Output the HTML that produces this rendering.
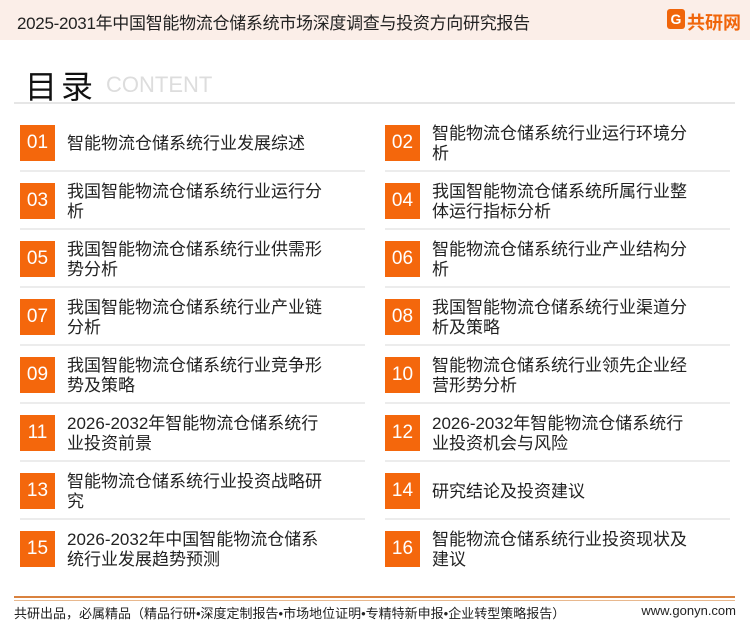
<!DOCTYPE html>
<html><head><meta charset="utf-8"><style>
body{margin:0;width:750px;height:622px;background:#fff;font-family:"Liberation Sans","Noto Sans CJK SC",sans-serif;position:relative;overflow:hidden;color:#222}
.hdr{position:absolute;left:0;top:0;width:750px;height:40px;background:#fbeee8}
.hdr .t{position:absolute;left:17px;top:9px;font-size:17px;color:#222;letter-spacing:-0.3px}
.logo{position:absolute;left:667px;top:9px;font-size:18px;font-weight:bold;color:#f0650a}
.logo b{display:inline-block;width:18px;height:20px;background:#f0650a;color:#fff;font-size:14px;text-align:center;line-height:20px;border-radius:3px;margin-right:2px;vertical-align:top}
.ml{position:absolute;left:25px;top:62px;font-size:32px;color:#111;letter-spacing:4px}
.ct{position:absolute;left:106px;top:72px;font-size:22px;color:#ddd}
.hl{position:absolute;left:14px;top:102px;width:721px;height:2px;background:#e6e6e6}
.box{position:absolute;width:35px;height:36px;background:#f4670c;color:#fff;font-size:19px;text-align:center;line-height:36px}
.tx{position:absolute;font-size:17px;line-height:20px;color:#222;width:262px}
.sep{position:absolute;height:2px;background:#ececec;width:345px}
.fl1{position:absolute;left:14px;top:596px;width:721px;height:2px;background:#d9823f}
.fl2{position:absolute;left:14px;top:600px;width:721px;height:1px;background:#e8b88e}
.ft{position:absolute;left:14px;top:603px;font-size:13px;color:#222}
.fr{position:absolute;right:14px;top:603px;font-size:13px;color:#222}
</style></head><body>
<div class="hdr"><div class="t">2025-2031年中国智能物流仓储系统市场深度调查与投资方向研究报告</div><div class="logo"><b>G</b>共研网</div></div>
<div class="ml">目录</div><div class="ct">CONTENT</div><div class="hl"></div>

<div class="box" style="left:20px;top:125px">01</div><div class="tx" style="left:67px;top:134px">智能物流仓储系统行业发展综述</div><div class="sep" style="left:20px;top:170px"></div>
<div class="box" style="left:385px;top:125px">02</div><div class="tx" style="left:432px;top:124px">智能物流仓储系统行业运行环境分析</div><div class="sep" style="left:385px;top:170px"></div>

<div class="box" style="left:20px;top:183px">03</div><div class="tx" style="left:67px;top:182px">我国智能物流仓储系统行业运行分析</div><div class="sep" style="left:20px;top:228px"></div>
<div class="box" style="left:385px;top:183px">04</div><div class="tx" style="left:432px;top:182px">我国智能物流仓储系统所属行业整体运行指标分析</div><div class="sep" style="left:385px;top:228px"></div>

<div class="box" style="left:20px;top:241px">05</div><div class="tx" style="left:67px;top:240px">我国智能物流仓储系统行业供需形势分析</div><div class="sep" style="left:20px;top:286px"></div>
<div class="box" style="left:385px;top:241px">06</div><div class="tx" style="left:432px;top:240px">智能物流仓储系统行业产业结构分析</div><div class="sep" style="left:385px;top:286px"></div>

<div class="box" style="left:20px;top:299px">07</div><div class="tx" style="left:67px;top:298px">我国智能物流仓储系统行业产业链分析</div><div class="sep" style="left:20px;top:344px"></div>
<div class="box" style="left:385px;top:299px">08</div><div class="tx" style="left:432px;top:298px">我国智能物流仓储系统行业渠道分析及策略</div><div class="sep" style="left:385px;top:344px"></div>

<div class="box" style="left:20px;top:357px">09</div><div class="tx" style="left:67px;top:356px">我国智能物流仓储系统行业竞争形势及策略</div><div class="sep" style="left:20px;top:402px"></div>
<div class="box" style="left:385px;top:357px">10</div><div class="tx" style="left:432px;top:356px">智能物流仓储系统行业领先企业经营形势分析</div><div class="sep" style="left:385px;top:402px"></div>

<div class="box" style="left:20px;top:415px">11</div><div class="tx" style="left:67px;top:414px">2026-2032年智能物流仓储系统行业投资前景</div><div class="sep" style="left:20px;top:460px"></div>
<div class="box" style="left:385px;top:415px">12</div><div class="tx" style="left:432px;top:414px">2026-2032年智能物流仓储系统行业投资机会与风险</div><div class="sep" style="left:385px;top:460px"></div>

<div class="box" style="left:20px;top:473px">13</div><div class="tx" style="left:67px;top:472px">智能物流仓储系统行业投资战略研究</div><div class="sep" style="left:20px;top:518px"></div>
<div class="box" style="left:385px;top:473px">14</div><div class="tx" style="left:432px;top:482px">研究结论及投资建议</div><div class="sep" style="left:385px;top:518px"></div>

<div class="box" style="left:20px;top:531px">15</div><div class="tx" style="left:67px;top:530px">2026-2032年中国智能物流仓储系统行业发展趋势预测</div>
<div class="box" style="left:385px;top:531px">16</div><div class="tx" style="left:432px;top:530px">智能物流仓储系统行业投资现状及建议</div>

<div class="fl1"></div><div class="fl2"></div>
<div class="ft">共研出品，必属精品（精品行研•深度定制报告•市场地位证明•专精特新申报•企业转型策略报告）</div>
<div class="fr">www.gonyn.com</div>
</body></html>
